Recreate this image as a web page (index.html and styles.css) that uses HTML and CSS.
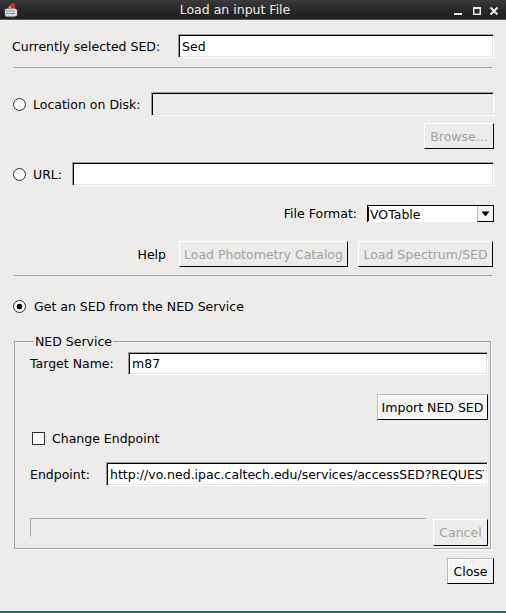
FILE: index.html
```html
<!DOCTYPE html>
<html>
<head>
<meta charset="utf-8">
<title>Load an input File</title>
<link rel="stylesheet" href="styles.css">
</head>
<body>
<div class="window">
  <div class="titlebar">
    <div class="tb-left">
      <svg class="app-icon" width="16" height="16" viewBox="0 0 16 16">
        <path d="M1.5 7.5 L4 6 L12 6 L14.5 8 L14.5 13.5 L12 15 L3 15 L1.5 13 Z" fill="#d9dde2" stroke="#3a3f46" stroke-width="1"/>
        <path d="M3 9 L12 9 M3 11.5 L12 11.5" stroke="#8b929c" stroke-width="1"/>
        <path d="M5 6 L6.5 3 L11 3 L12 6" fill="#c7ccd3" stroke="#3a3f46" stroke-width="1"/>
        <circle cx="9.5" cy="3.5" r="2.6" fill="#e0242a"/>
      </svg>
    </div>
    <div class="tb-title">Load an input File</div>
    <div class="tb-right">
      <svg width="56" height="20" viewBox="0 0 56 20">
        <rect x="4" y="13" width="8" height="2" fill="#ececec"/>
        <rect x="23.75" y="7.75" width="6.5" height="6.5" fill="none" stroke="#ececec" stroke-width="1.5"/>
        <rect x="23" y="7" width="8" height="2" fill="#ececec"/>
        <path d="M40.5 7.5 L47.5 14.5 M47.5 7.5 L40.5 14.5" stroke="#ececec" stroke-width="2"/>
      </svg>
    </div>
  </div>

  <div class="content">
    <div class="row row-sed">
      <span class="lbl lbl-sed">Currently selected SED:</span>
      <input class="field" type="text" value="Sed">
    </div>

    <hr class="sep sep1">

    <div class="row row-disk">
      <input class="radio" type="radio" name="src">
      <span class="lbl lbl-disk">Location on Disk:</span>
      <input class="field field-disabled" type="text" disabled>
    </div>

    <div class="row row-browse">
      <button class="btn btn-disabled btn-browse" disabled>Browse...</button>
    </div>

    <div class="row row-url">
      <input class="radio" type="radio" name="src">
      <span class="lbl lbl-url">URL:</span>
      <input class="field" type="text">
    </div>

    <div class="row row-format">
      <span class="lbl lbl-format">File Format:</span>
      <div class="combo">
        <span class="combo-text"><span class="caret"></span>VOTable</span>
        <span class="combo-arrow">
          <svg width="9" height="6" viewBox="0 0 9 6"><path d="M0.5 0.5 L8.5 0.5 L4.5 5.5 Z" fill="#000"/></svg>
        </span>
      </div>
    </div>

    <div class="row row-load">
      <span class="lbl lbl-help">Help</span>
      <button class="btn btn-disabled btn-cat" disabled>Load Photometry Catalog</button>
      <button class="btn btn-disabled btn-spec" disabled>Load Spectrum/SED</button>
    </div>

    <hr class="sep sep2">

    <div class="row row-ned">
      <input class="radio" type="radio" name="src" checked>
      <span class="lbl lbl-ned">Get an SED from the NED Service</span>
    </div>

    <fieldset class="group">
      <legend class="group-title">NED Service</legend>
      <div class="row row-target">
        <span class="lbl lbl-target">Target Name:</span>
        <input class="field" type="text" value="m87">
      </div>
      <div class="row row-import">
        <button class="btn btn-import">Import NED SED</button>
      </div>
      <div class="row row-check">
        <input class="check" type="checkbox">
        <span class="lbl lbl-check">Change Endpoint</span>
      </div>
      <div class="row row-endpoint">
        <span class="lbl lbl-endpoint">Endpoint:</span>
        <input class="field field-endpoint" type="text" value="http://vo.ned.ipac.caltech.edu/services/accessSED?REQUEST=getData&amp;TARGETNAME=">
      </div>
      <div class="row row-progress">
        <div class="progress"></div>
        <button class="btn btn-disabled btn-cancel" disabled>Cancel</button>
      </div>
    </fieldset>

    <div class="row row-close">
      <button class="btn btn-close">Close</button>
    </div>
  </div>
</div>
</body>
</html>
```

FILE: styles.css
```css
html, body {
  margin: 0;
  padding: 0;
}

body {
  background: #137272;
  font-family: "DejaVu Sans", "Noto Sans", sans-serif;
  font-size: 12.5px;
  line-height: 15px;
  color: #000;
}

.window {
  width: 506px;
  height: 611px;
  background: #edecea;
  overflow: hidden;
}

/* ---------- title bar ---------- */
.titlebar {
  height: 19px;
  border-bottom: 1px solid #55575a;
  background: linear-gradient(#3a3a3a, #262626 60%, #1e1e1e);
  display: flex;
  align-items: center;
}

.tb-left {
  width: 20px;
  height: 19px;
  display: flex;
  align-items: flex-start;
}

.app-icon {
  margin: 2px 0 0 3px;
}

.tb-title {
  flex: 1;
  text-align: center;
  color: #ececec;
  font-size: 12.5px;
  line-height: 19px;
}

.tb-right {
  width: 56px;
  height: 20px;
  display: flex;
  align-self: flex-start;
}

/* ---------- content ---------- */
.content {
  padding: 0 12px;
}

.row {
  display: flex;
  align-items: center;
}

.lbl {
  white-space: nowrap;
  flex: none;
}

.field {
  flex: 1;
  min-width: 0;
  box-sizing: border-box;
  height: 24px;
  margin: 0;
  padding: 0 3px;
  font: inherit;
  color: #000;
  background: #fff;
  border-style: solid;
  border-width: 1px;
  border-color: #9d9d9d #fff #fff #9d9d9d;
  box-shadow: inset 1px 1px 0 #000, inset -1px -1px 0 #e4e3e1;
  outline: none;
}

.field-disabled {
  background: #edecea;
}

.radio {
  appearance: none;
  -webkit-appearance: none;
  flex: none;
  width: 13px;
  height: 13px;
  margin: 0 0 0 1px;
  box-sizing: border-box;
  border: 1px solid #2f2f2f;
  border-radius: 50%;
  background: #fbfbfb;
}

.radio:checked {
  background: radial-gradient(circle, #000 0 2.6px, #fbfbfb 3.1px);
}

.check {
  appearance: none;
  -webkit-appearance: none;
  flex: none;
  width: 13px;
  height: 13px;
  margin: 0 0 0 2px;
  box-sizing: border-box;
  border: 1px solid #2f2f2f;
  background: #fbfbfb;
}

.btn {
  box-sizing: border-box;
  height: 26px;
  margin: 0;
  padding: 0;
  font: inherit;
  color: #000;
  background: #f4f4f3;
  border-style: solid;
  border-width: 1px;
  border-color: #b9b9b9 #000 #000 #b9b9b9;
  box-shadow: inset 1px 1px 0 #fff;
  white-space: nowrap;
}

.btn-disabled {
  color: #a2a2a2;
  background: #edecea;
  border-color: #fff #000 #000 #fff;
  box-shadow: none;
}

/* row 1 */
.row-sed {
  margin-top: 14px;
}

.lbl-sed {
  width: 166px;
}

.sep {
  height: 0;
  border: 0;
  border-top: 1px solid #a4a4a4;
  margin: 0 2px;
}

.sep1 {
  margin-top: 9px;
}

/* location on disk */
.row-disk {
  margin-top: 24px;
}

.lbl-disk {
  margin-left: 7px;
  width: 118px;
}

.row-browse {
  margin-top: 7px;
  justify-content: flex-end;
}

.btn-browse {
  width: 70px;
}

/* url */
.row-url {
  margin-top: 13px;
}

.lbl-url {
  margin-left: 7px;
  width: 39px;
}

/* format */
.row-format {
  margin-top: 19px;
  justify-content: flex-end;
}

.lbl-format {
  margin-right: 10px;
}

.combo {
  width: 127px;
  height: 17px;
  box-sizing: border-box;
  display: flex;
  background: #fff;
  border-top: 1px solid #000;
  border-left: 1px solid #000;
}

.combo-text {
  flex: 1;
  display: flex;
  align-items: center;
  line-height: 15px;
  padding-left: 0;
}

.caret {
  width: 1px;
  height: 14px;
  background: #000;
  margin-right: 1px;
}

.combo-arrow {
  width: 17px;
  box-sizing: border-box;
  background: #f4f4f3;
  border-left: 1px solid #b9b9b9;
  border-right: 1px solid #000;
  border-bottom: 1px solid #000;
  display: flex;
  align-items: center;
  justify-content: center;
}

/* load buttons */
.row-load {
  margin-top: 19px;
  justify-content: flex-end;
  padding-right: 1px;
}

.lbl-help {
  margin-right: 13px;
}

.btn-cat {
  width: 169px;
  margin-right: 10px;
}

.btn-spec {
  width: 135px;
}

.sep2 {
  margin-top: 8px;
}

/* NED radio */
.row-ned {
  margin-top: 22px;
  height: 17px;
}

.lbl-ned {
  margin-left: 8px;
}

/* group */
.group {
  margin: 19px 3px 0 2px;
  padding: 3px 2px 2px 15px;
  border: 1px solid #a2a2a2;
  box-shadow: 1px 1px 0 #fff;
  min-width: 0;
}

.group-title {
  margin-left: 4px;
  padding: 0 1px;
  line-height: 15px;
}

.row-target .field {
  height: 23px;
}

.lbl-target {
  width: 98px;
}

.row-import {
  margin-top: 19px;
  justify-content: flex-end;
}

.btn-import {
  width: 111px;
}

.row-check {
  margin-top: 12px;
  height: 13px;
}

.lbl-check {
  margin-left: 7px;
}

.row-endpoint {
  margin-top: 17px;
}

.lbl-endpoint {
  width: 76px;
}

.row-progress {
  margin-top: 32px;
  align-items: flex-start;
}

.progress {
  width: 396px;
  height: 19px;
  box-sizing: border-box;
  border: 1px solid #a9a9a9;
  border-right-color: #e9e8e6;
  border-bottom-color: #e9e8e6;
  background: #edecea;
}

.btn-cancel {
  width: 55px;
  height: 27px;
  margin: 1px 0 0 7px;
}

/* close */
.row-close {
  margin-top: 9px;
  justify-content: flex-end;
}

.btn-close {
  width: 47px;
}
```
